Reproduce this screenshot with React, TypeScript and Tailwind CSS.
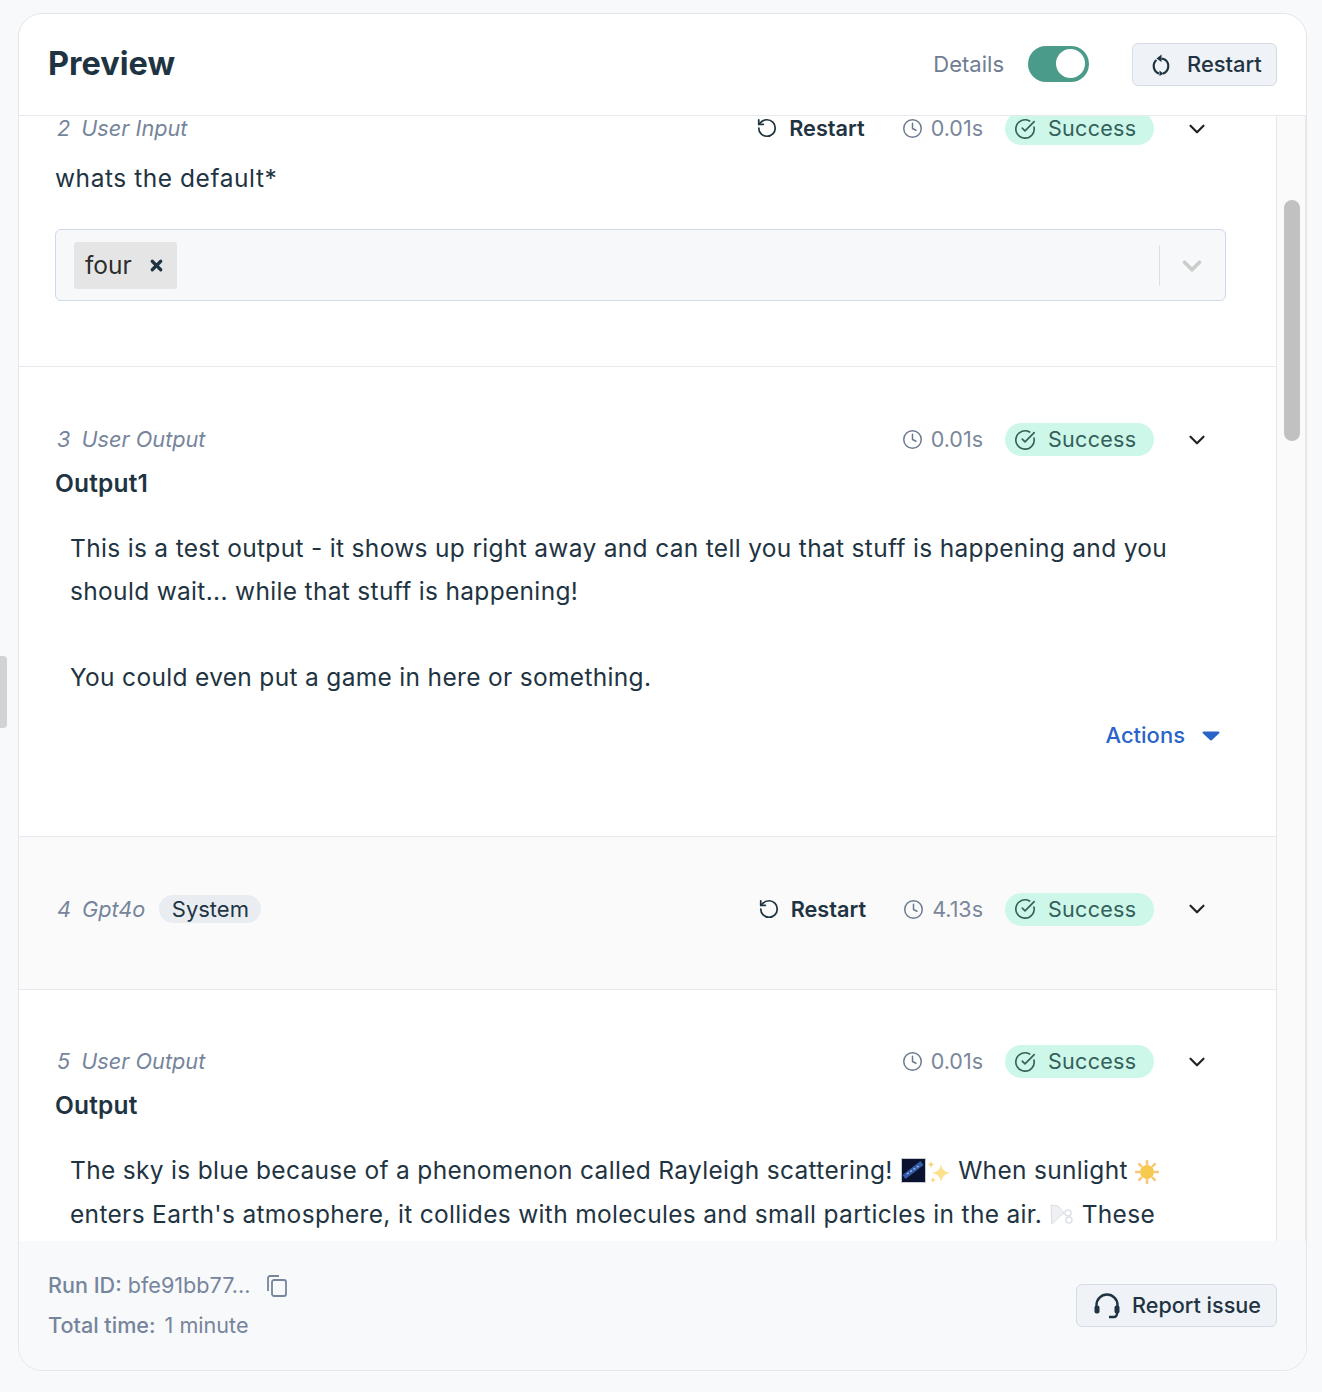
import { ChevronDown, CircleCheckBig, Clock, RotateCcw, X } from "lucide-react";
import type { ReactNode } from "react";

const font = { fontFamily: "Inter, 'Liberation Sans', sans-serif" };

function Status({ time, restart }: { time: string; restart?: boolean }) {
  return (
    <div className="flex items-center pr-[16px]">
      {restart && (
        <div className="mr-[37px] flex items-center gap-[11px] text-[21.7px] font-semibold text-[#1f3442]">
          <RotateCcw size={22} strokeWidth={1.9} />
          Restart
        </div>
      )}
      <Clock size={21} strokeWidth={1.7} className="text-[#6b7a90]" />
      <span className="ml-[8px] mr-[22px] text-[21.5px] text-[#7a879b]">{time}</span>
      <div className="flex h-[33px] w-[149px] items-center gap-[12px] rounded-full bg-[#ccf7e9] pl-[9px] text-[21.5px] tracking-[0.3px] text-[#33605a]">
        <CircleCheckBig size={22} strokeWidth={1.8} />
        Success
      </div>
      <ChevronDown size={26} strokeWidth={2} className="ml-[30px] text-[#222]" />
    </div>
  );
}

function RowTitle({ n, name, children }: { n: number; name: string; children?: ReactNode }) {
  return (
    <div className="flex items-center text-[21.7px] italic text-[#76859b]">
      <span className="mr-[11px] ml-[2px]">{n}</span>
      {name}
      {children}
    </div>
  );
}

function Milky() {
  return (
    <svg width="25" height="25" viewBox="0 0 25 25" className="mx-[1px] inline-block align-[-4px]">
      <rect x="0.5" y="0.5" width="24" height="24" fill="#0b1230" stroke="#c8ccd0" />
      <path d="M3 19 L21 5" stroke="#3f6fc4" strokeWidth="5" opacity="0.8" />
      <path d="M6 16 L19 7" stroke="#9bb8ea" strokeWidth="1.5" strokeDasharray="2 2" />
    </svg>
  );
}

function Sparkles() {
  return (
    <svg width="24" height="24" viewBox="0 0 24 24" className="inline-block align-[-5px]">
      <path d="M14 4 Q15 12 23 13 Q15 14 14 22 Q13 14 5 13 Q13 12 14 4Z" fill="#fde08a" />
      <path d="M4 1 Q4.5 4 7 4.5 Q4.5 5 4 8 Q3.5 5 1 4.5 Q3.5 4 4 1Z" fill="#fbd784" />
      <path d="M6 17 Q6.4 19.4 8.5 20 Q6.4 20.6 6 23 Q5.6 20.6 3.5 20 Q5.6 19.4 6 17Z" fill="#fbd784" />
    </svg>
  );
}

function Sun() {
  return (
    <svg width="24" height="24" viewBox="0 0 24 24" className="inline-block align-[-5px]">
      <g stroke="#f8c77a" strokeWidth="2.6" strokeLinecap="round">
        <path d="M12 1v3M12 20v3M1 12h3M20 12h3M4.2 4.2l2 2M17.8 17.8l2 2M4.2 19.8l2-2M17.8 6.2l2-2" />
      </g>
      <circle cx="12" cy="12" r="7" fill="#f8c94f" />
    </svg>
  );
}

function Wind() {
  return (
    <svg width="25" height="24" viewBox="0 0 25 24" className="inline-block align-[-4px]">
      <path d="M2 2 L9 3 L15 10 L9 15 L3 21 Z" fill="#eef0f4" stroke="#d9dde4" />
      <circle cx="19" cy="10" r="3" fill="none" stroke="#dde1e7" strokeWidth="1.5" />
      <circle cx="20" cy="17" r="3" fill="none" stroke="#dde1e7" strokeWidth="1.5" />
    </svg>
  );
}

export default function App() {
  return (
    <div className="h-[1392px] w-[1322px] bg-[#f7f9fb] pt-[13px] pl-[18px]" style={font}>
      <div className="flex h-[1358px] w-[1289px] flex-col overflow-hidden rounded-[24px] border border-[#e3e6ea] bg-white">
        <header className="flex h-[102px] shrink-0 items-center justify-between border-b border-[#e6e9ee] pr-[29px] pl-[29px]">
          <h1 className="text-[32.5px] font-bold text-[#1f3442]">Preview</h1>
          <div className="flex items-center">
            <span className="text-[22px] text-[#6f7d93]">Details</span>
            <div className="mr-[43px] mb-[2px] ml-[24px] flex h-[36px] w-[61px] items-center justify-end rounded-full bg-[#4b9b8a] pr-[4px]">
              <div className="h-[29px] w-[29px] rounded-full bg-white" />
            </div>
            <button className="flex h-[43px] w-[145px] items-center gap-[15px] rounded-[6px] border border-[#d5dbe3] bg-[#eff2f6] pl-[17px] text-[21.9px] font-medium text-[#1f3442]">
              <svg width="22" height="24" viewBox="0 0 22 24" fill="none" stroke="currentColor" strokeWidth="2.2">
                <path d="M6.5 7A8 8 0 0 0 9 20.6" />
                <path d="M13 20.6A8 8 0 0 0 15.5 7a8 8 0 0 0-4-1.3" />
                <path d="M11.5 1.5 L6.5 5.5 L11.5 9 Z" fill="currentColor" stroke="none" />
                <path d="M9.5 17.5 L13.5 20.8 L9.5 23 Z" fill="currentColor" stroke="none" />
              </svg>
              Restart
            </button>
          </div>
        </header>

        <div className="flex min-h-0 flex-1">
          <div className="min-w-0 flex-1 overflow-hidden">
            <section className="-mt-[4px] h-[255px] border-b border-[#e6e9ee] pr-[50px] pl-[36px]">
              <div className="flex h-[33px] items-center justify-between">
                <RowTitle n={2} name="User Input" />
                <Status time="0.01s" restart />
              </div>
              <p className="mt-[16px] text-[24.5px] leading-[34px] tracking-[0.55px] text-[#1f3442]">whats the default*</p>
              <div className="mt-[34px] flex h-[72px] items-center rounded-[6px] border border-[#cfd8e6] bg-[#f6f8fa] pl-[18px]">
                <div className="flex h-[47px] w-[103px] items-center rounded-[3px] bg-[#e5e5e5] pl-[11px] text-[24.5px] text-[#2d2d2d]">
                  four
                  <X size={17} strokeWidth={4.5} className="ml-[16px] text-[#1f3442]" />
                </div>
                <div className="ml-auto h-[41px] w-[1px] bg-[#dddfe2]" />
                <ChevronDown size={30} strokeWidth={3} className="mt-[1px] mr-[18px] ml-[17px] text-[#cccccc]" />
              </div>
            </section>

            <section className="h-[470px] border-b border-[#e6e9ee] pt-[56px] pr-[50px] pl-[36px]">
              <div className="flex h-[33px] items-center justify-between">
                <RowTitle n={3} name="User Output" />
                <Status time="0.01s" />
              </div>
              <h3 className="mt-[10px] text-[24.5px] leading-[34px] font-semibold tracking-[0.2px] text-[#1f3442]">Output1</h3>
              <div className="mt-[27px] pl-[15px] text-[24.5px] leading-[43px] tracking-[0.32px] text-[#1f3442]">
                <p>This is a test output - it shows up right away and can tell you that stuff is happening and you should wait... while that stuff is happening!</p>
                <p className="mt-[43px]">You could even put a game in here or something.</p>
              </div>
              <div className="mt-[20px] flex items-center justify-end gap-[17px] pr-[6px] text-[22px] font-medium text-[#2b64c8]">
                Actions
                <svg width="18" height="10" viewBox="0 0 18 10" fill="currentColor">
                  <path d="M1.5 0.5h15a1 1 0 0 1 .7 1.7l-7.5 7a1 1 0 0 1-1.4 0l-7.5-7a1 1 0 0 1 .7-1.7z" />
                </svg>
              </div>
            </section>

            <section className="flex h-[153px] items-center justify-between border-b border-[#e6e9ee] bg-[#fafafa] pr-[50px] pb-[8px] pl-[36px]">
              <RowTitle n={4} name="Gpt4o">
                <span className="ml-[14px] flex h-[28px] w-[102px] items-center justify-center rounded-full bg-[#e9edf2] pt-[2px] text-[22px] not-italic text-[#1f3442]">
                  System
                </span>
              </RowTitle>
              <Status time="4.13s" restart />
            </section>

            <section className="pt-[55px] pr-[50px] pl-[36px]">
              <div className="flex h-[33px] items-center justify-between">
                <RowTitle n={5} name="User Output" />
                <Status time="0.01s" />
              </div>
              <h3 className="mt-[10px] text-[24.5px] leading-[34px] font-semibold tracking-[0.2px] text-[#1f3442]">Output</h3>
              <div className="mt-[26px] pl-[15px] text-[24.5px] leading-[44px] tracking-[0.32px] text-[#1f3442]">
                <p>
                  The sky is blue because of a phenomenon called Rayleigh scattering! <Milky />
                  <Sparkles /> When sunlight <Sun /> enters Earth's atmosphere, it collides with molecules and small particles in the air. <Wind /> These
                </p>
              </div>
            </section>
          </div>

          <div className="w-[30px] shrink-0 border-x border-[#e8e8e8] bg-[#fafafa] pt-[84px] pl-[7px]">
            <div className="h-[241px] w-[16px] rounded-full bg-[#c1c1c1]" />
          </div>
        </div>

        <footer className="flex h-[129px] shrink-0 items-center justify-between bg-[#f8f9fb] pr-[29px] pl-[29px] text-[21.6px] text-[#76859b]">
          <div>
            <div className="flex h-[40px] items-center">
              <span className="font-medium">Run ID:</span>
              <span className="ml-[6px]">bfe91bb77...</span>
              <svg width="20" height="22" viewBox="0 0 20 22" fill="none" stroke="currentColor" strokeWidth="1.8" className="ml-[17px]">
                <path d="M1 16V3a2 2 0 0 1 2-2h9" />
                <rect x="5" y="5" width="14" height="16" rx="2" />
              </svg>
            </div>
            <div className="flex h-[40px] items-center">
              <span className="font-medium">Total time:</span>
              <span className="ml-[9px]">1 minute</span>
            </div>
          </div>
          <button className="flex h-[43px] w-[201px] items-center gap-[12px] rounded-[6px] border border-[#d5dbe3] bg-[#eff2f6] pl-[17px] font-medium text-[#1f3442]">
            <svg width="26" height="26" viewBox="0 0 26 26" fill="none" stroke="currentColor" strokeWidth="2.4">
              <path d="M2.5 14v-2a10.5 10.5 0 0 1 21 0v2" />
              <rect x="0.5" y="12.5" width="5" height="8" rx="2" fill="currentColor" stroke="none" />
              <rect x="20.5" y="12.5" width="5" height="8" rx="2" fill="currentColor" stroke="none" />
              <path d="M23 20v1a3 3 0 0 1-3 3h-5" />
            </svg>
            Report issue
          </button>
        </footer>
      </div>
      <div className="fixed top-[656px] left-0 h-[72px] w-[7px] rounded-r-[4px] bg-[#d0d3d6]" />
    </div>
  );
}
